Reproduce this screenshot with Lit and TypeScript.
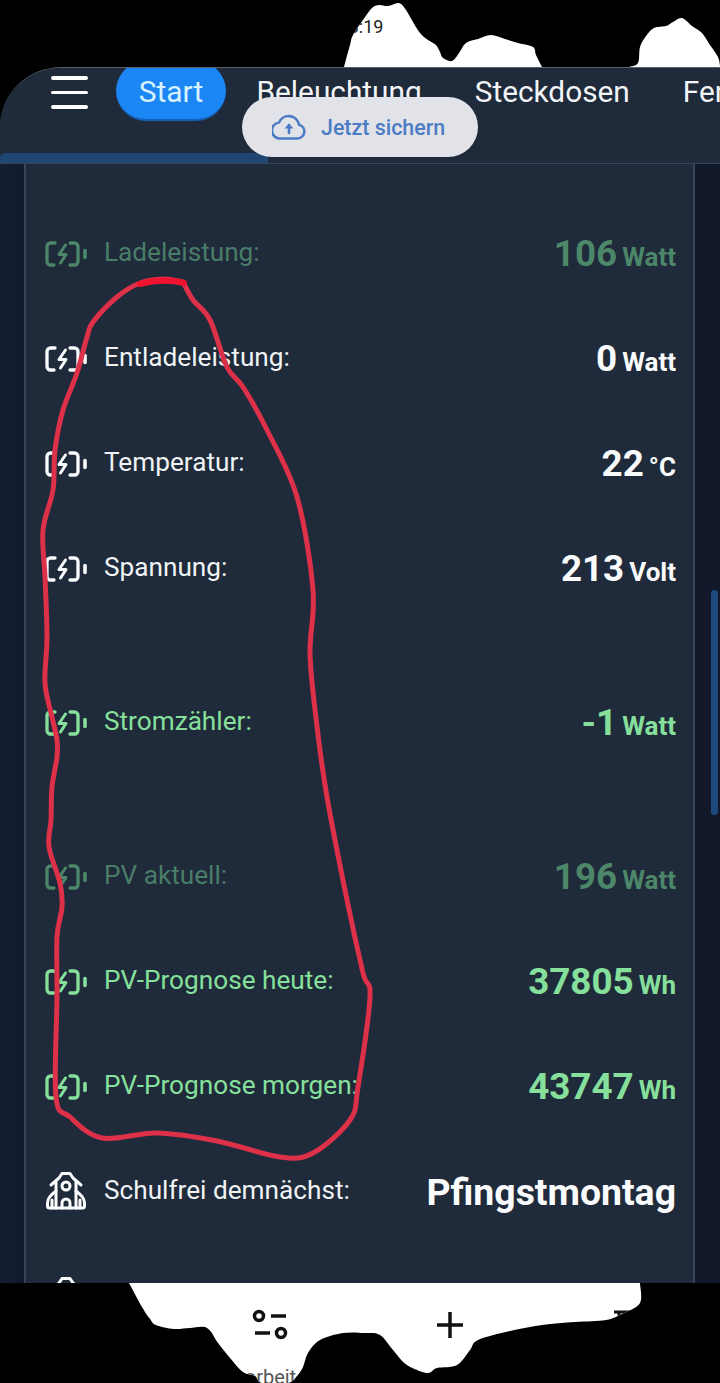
import { LitElement, html, css, svg } from "lit";
import { customElement } from "lit/decorators.js";

type P = [number, number];

function smooth(pts: P[], closeIt = false): string {
  let d = `M${pts[0][0]} ${pts[0][1]}`;
  for (let i = 0; i < pts.length - 1; i++) {
    const a = pts[Math.max(0, i - 1)];
    const b = pts[i];
    const c = pts[i + 1];
    const e = pts[Math.min(pts.length - 1, i + 2)];
    const c1: P = [b[0] + (c[0] - a[0]) / 6, b[1] + (c[1] - a[1]) / 6];
    const c2: P = [c[0] - (e[0] - b[0]) / 6, c[1] - (e[1] - b[1]) / 6];
    d += ` C${c1[0].toFixed(1)} ${c1[1].toFixed(1)} ${c2[0].toFixed(1)} ${c2[1].toFixed(1)} ${c[0]} ${c[1]}`;
  }
  return closeIt ? d + " Z" : d;
}
const toClip = (shapes: P[][]) =>
  `clip-path: path('${shapes.map((s) => smooth(s, true)).join(" ")}')`;

// Torn white areas of the screenshot, relative to their strips.
const topBlobs: P[][] = [
  [[344, 67], [350, 45], [353, 35], [363, 20], [372, 8], [379, 5], [388, 6], [399, 3], [406, 10], [413, 22], [420, 33], [428, 40], [436, 45], [440, 52], [443, 58], [452, 61], [459, 53], [466, 43], [478, 39], [491, 35], [505, 39], [518, 43], [533, 47], [536, 55], [542, 67]],
  [[629, 67], [638, 63], [640, 47], [646, 36], [654, 28], [666, 26], [673, 22], [682, 18], [692, 26], [702, 33], [710, 45], [718, 57], [720, 66], [720, 67]],
];
const bottomBlob: P[] = [
  [129, 0], [142, 24], [150, 36], [156, 42], [174, 46], [190, 45], [207, 45], [218, 60], [230, 75], [243, 89], [255, 93], [262, 100],
  [288, 100], [297, 93], [303, 84], [308, 70], [320, 57], [343, 50], [365, 50], [380, 52], [393, 67], [407, 82], [427, 90], [437, 85], [457, 82], [470, 67], [478, 57], [510, 48], [542, 42], [575, 39], [606, 37], [624, 30], [640, 20], [640, 0],
];

const scribble: P[] = [
  [183, 282], [163, 279], [140, 283], [117, 297], [93, 322], [87, 337], [77, 373], [63, 410], [55, 450], [53, 490], [43, 530], [45, 577], [47, 637], [45, 683], [52, 717],
  [57, 740], [57, 757], [52, 787], [51, 820], [49, 847], [60, 883], [62, 907], [57, 937], [57, 997], [56, 1097], [70, 1117], [102, 1138], [157, 1133], [217, 1141], [280, 1157], [313, 1153], [350, 1120], [358, 1087], [370, 997], [363, 973], [347, 900], [327, 797],
  [316, 718], [310, 653], [313, 590], [297, 497], [267, 430], [243, 387], [227, 367], [210, 320], [193, 300], [183, 282],
];

const battery = html`<svg class="ico" viewBox="0 0 42 26" width="42" height="26" fill="none" stroke="currentColor" stroke-linecap="round" stroke-linejoin="round" stroke-width="3.300">
  <path d="M10 2H5.500A3.500 3.500 0 0 0 2 5.500v15A3.500 3.500 0 0 0 5.500 24H9"/>
  <path d="M25 2h4.500A3.500 3.500 0 0 1 33 5.500v15a3.500 3.500 0 0 1-3.500 3.500H25"/>
  <path d="M40 9.500v7" stroke-width="3.600"/>
  <path d="M20.500 4l-6.500 9.500h7l-5.500 8.500" stroke-width="3"/>
</svg>`;

const house = html`<svg class="ico" viewBox="0 0 42 42" width="42" height="42" fill="none" stroke="currentColor" stroke-linecap="round" stroke-linejoin="round" stroke-width="3">
  <path d="M6 14l8-7 3-4.500h8L28 7l8 7"/>
  <path d="M11 11v26M31 11v26"/>
  <circle cx="21" cy="15" r="4"/>
  <path d="M17 37v-5a4 4 0 0 1 8 0v5"/>
  <path d="M11 20C6 24 2.500 27 2.500 32v3a2 2 0 0 0 2 2h33a2 2 0 0 0 2-2v-3c0-5-3.500-8-8.500-12"/>
  <path d="M7 29v8M35 29v8"/>
</svg>`;

interface Row { label: string; value: string; unit: string; tone: string; group?: boolean; }
const rows: Row[] = [
  { label: "Ladeleistung:", value: "106", unit: "Watt", tone: "dim" },
  { label: "Entladeleistung:", value: "0", unit: "Watt", tone: "white" },
  { label: "Temperatur:", value: "22", unit: "°C", tone: "white" },
  { label: "Spannung:", value: "213", unit: "Volt", tone: "white" },
  { label: "Stromzähler:", value: "-1", unit: "Watt", tone: "green", group: true },
  { label: "PV aktuell:", value: "196", unit: "Watt", tone: "dim", group: true },
  { label: "PV-Prognose heute:", value: "37805", unit: "Wh", tone: "green" },
  { label: "PV-Prognose morgen:", value: "43747", unit: "Wh", tone: "green" },
];

@customElement("app-root")
export class AppRoot extends LitElement {
  static styles = css`
    :host { display: block; width: 720px; height: 1383px; background: #000; position: relative; overflow: hidden; font-family: Roboto, "Liberation Sans", sans-serif; }
    .status { height: 67px; background: #fff; color: #222; display: flex; justify-content: center; padding-top: 16px; box-sizing: border-box; font-size: 18px; line-height: 22px; padding-left: 2px; }
    .frame { height: 1216px; border-top-left-radius: 62px 60px; overflow: hidden; background: #121b2f; display: flex; flex-direction: column; border-top: 1px solid #59606c; box-sizing: border-box; }
    .head { height: 96px; flex: none; background: #1f2a3a; position: relative; display: flex; align-items: flex-start; border-bottom: 1px solid #39465a; box-sizing: border-box; }
    .burger { width: 37px; margin: 8px 28px 0 51px; display: flex; flex-direction: column; gap: 11px; flex: none; }
    .burger i { display: block; height: 3.500px; border-radius: 2px; background: #fff; }
    .tabs { display: flex; align-items: center; gap: 53px; font-size: 29.800px; color: #f2f5f7; white-space: nowrap; height: 61px; margin-top: -7px; overflow: hidden; flex: 1; min-width: 0; }
    .tab.on { background: #1c86f5; color: #d6f2ff; width: 110px; height: 60px; margin-bottom: 1px; padding-top: 2px; box-sizing: border-box; border-radius: 30px; border-bottom: 2px solid #1560b8; display: flex; align-items: center; justify-content: center; margin-right: -22.500px; flex: none; font-size: 30px; }
    .progress { position: absolute; left: 0; bottom: 0; width: 268px; height: 10px; background: #1f4672; border-radius: 5px 4px 0 0; }
    .body { flex: 1; min-height: 0; overflow: hidden; padding: 0 25px 0 24px; background: linear-gradient(90deg, #141e32, #111a2d 24px, #10182a 100%); }
    .card { background: #1f2a3a; border-left: 2px solid #39465a; border-right: 2px solid #39465a; padding-top: 37px; height: 100%; box-sizing: border-box; }
    .row { height: 105px; display: flex; align-items: center; padding: 0 17px 0 19px; }
    .row.group { margin-top: 49px; }
    .ico { flex: none; margin-right: 17px; }
    .label { font-size: 26.200px; flex: 1; white-space: nowrap; margin-bottom: 3px; }
    .val { font-size: 36.800px; font-weight: 700; white-space: nowrap; display: flex; align-items: baseline; gap: 5px; }
    .val small { font-size: 26px; font-weight: 700; }
    .big { font-size: 37.400px; font-weight: 700; white-space: nowrap; }
    .white { color: #fafbfc; }
    .white .label { color: #f0f3f5; }
    .green { color: #86e09c; }
    .dim { color: #4b8768; }
    .dim .label { color: #4a7d68; }
    .toast { position: absolute; left: 242px; top: 97px; width: 236px; height: 60px; border-radius: 30px; background: #e2e3e8; display: flex; align-items: center; padding-left: 30px; box-sizing: border-box; color: #4c7cc4; font-size: 21.400px; font-weight: 500; gap: 15px; }
    .thumb { position: absolute; left: 711px; top: 590px; width: 7px; height: 225px; border-radius: 4px; background: #1f4a80; }
    .tools { height: 100px; background: #fff; color: #111; display: grid; grid-template-columns: repeat(4, 180px); font-size: 20px; }
    .tool { display: flex; flex-direction: column; align-items: center; padding-top: 26px; gap: 24.500px; }
    .tool svg { display: block; flex: none; }
    .tool span { line-height: 22px; color: #555; }
    .scribble { position: absolute; left: 0; top: 0; pointer-events: none; }
  `;

  render() {
    return html`
      <div class="status" style=${toClip(topBlobs)}>13:19</div>
      <div class="frame">
        <div class="head">
          <div class="burger"><i></i><i></i><i></i></div>
          <div class="tabs">
            <span class="tab on">Start</span>
            <span class="tab">Beleuchtung</span>
            <span class="tab">Steckdosen</span>
            <span class="tab">Fenster</span>
          </div>
          <div class="progress"></div>
        </div>
        <div class="body">
          <div class="card">
            ${rows.map(
              (r) => html`<div class="row ${r.tone} ${r.group ? "group" : ""}">
                ${battery}
                <span class="label">${r.label}</span>
                <span class="val">${r.value}<small>${r.unit}</small></span>
              </div>`
            )}
            <div class="row white">
              ${house}
              <span class="label">Schulfrei demnächst:</span>
              <span class="big">Pfingstmontag</span>
            </div>
            <div class="row white">${house}</div>
          </div>
        </div>
      </div>
      <div class="tools" style=${toClip([bottomBlob])}>
        <div class="tool"></div>
        <div class="tool">
          <svg width="36" height="32" viewBox="0 0 36 32" fill="none" stroke="#111" stroke-width="3.500">
            <circle cx="7" cy="7" r="4.500"/><path d="M19 7h15M3 24h15"/><circle cx="29" cy="24" r="4.500"/>
          </svg>
          <span>Bearbeiten</span>
        </div>
        <div class="tool">
          <svg width="30" height="32" viewBox="0 0 30 32" fill="none" stroke="#111" stroke-width="3.500"><path d="M15 3v26M2 16h26"/></svg>
          <span>Hinzufügen</span>
        </div>
        <div class="tool">
          <svg width="36" height="32" viewBox="0 0 36 32" fill="none" stroke="#111" stroke-width="3"><path d="M2 3h32M7 3v24h22V3"/></svg>
          <span>Löschen</span>
        </div>
      </div>
      <div class="toast">
        <svg width="34" height="26" viewBox="0 0 34 26" fill="none" stroke="currentColor" stroke-width="2.600" stroke-linejoin="round">
          <path d="M9 24.500h16.500a7 7 0 0 0 1.500-13.800A10.500 10.500 0 0 0 7 8.500a8 8 0 0 0 2 16z"/>
          <path d="M17 19v-8" stroke-linecap="round"/>
          <path d="M12.500 14.500L17 9.500l4.500 5z" fill="currentColor" stroke="none"/>
        </svg>
        <span>Jetzt sichern</span>
      </div>
      <div class="thumb"></div>
      <svg class="scribble" width="720" height="1383" viewBox="0 0 720 1383" fill="none" stroke-linecap="round" stroke-linejoin="round">
        ${svg`<path d=${smooth(scribble)} stroke="#dd3049" stroke-width="5"/>
        <path d="M140 284Q162 278 184 283" stroke="#f0122f" stroke-width="6"/>`}
      </svg>
    `;
  }
}
